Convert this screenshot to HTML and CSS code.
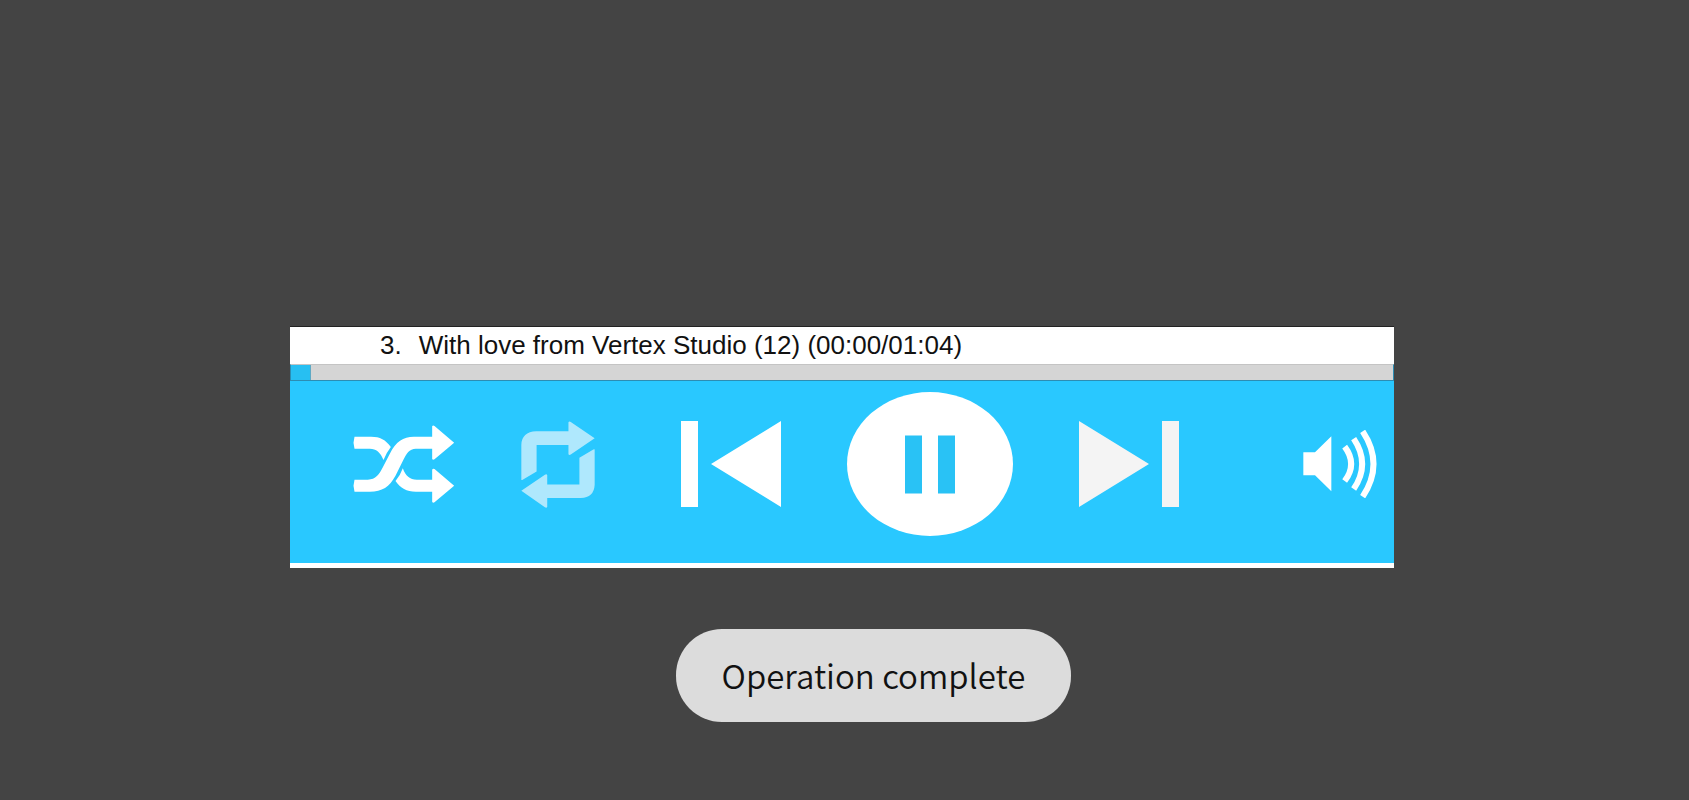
FILE: index.html
```html
<!DOCTYPE html>
<html lang="en">
<head>
    <meta charset="UTF-8">
    <meta name="viewport" content="width=device-width, initial-scale=1.0">
    <title>Music Player</title>
    <link rel="stylesheet" href="styles.css">
</head>
<body>
    <!-- Player -->
    <main class="player">
        <div class="track">
            <span class="track-number">3.</span>
            <span>With love from Vertex Studio (12) (00:00/01:04)</span>
        </div>
        <progress class="progress" value="18" max="1000" aria-label="Track position"></progress>

        <!-- Controls -->
        <div class="controls">
            <button type="button" class="shuffle" aria-label="Shuffle">
                <svg width="102" height="78" viewBox="39 46 303 234">
                    <path d="M42 81H92C118 81 136 90 151 112Q137 130 129 151C120 128 107 117 88 117H42L39 99Z"/>
                    <path d="M42 210H82C106 210 116 194 127 173L148 132C166 96 188 81 220 81H275V50Q277 46 282 49L341 99L282 149Q277 152 275 148V117H226C206 117 198 132 188 152L165 198C147 231 125 246 88 246H42L39 228Z"/>
                    <path d="M187 176C195 199 208 210 229 210H275V180Q277 175 282 178L341 228L282 278Q277 281 275 276V246H226C198 246 180 236 165 214Q179 198 187 176Z"/>
                </svg>
            </button>
            <button type="button" class="repeat" aria-label="Repeat">
                <svg width="74" height="87" viewBox="542 32 223 262">
                    <path d="M543 209V104Q544 65 588 63H685V36Q687 32 692 35L764 84L692 133Q687 136 685 132V104H589V184L547 209Q544 211 543 209Z"/>
                    <path d="M764 118V224Q762 263 722 264H621V291Q619 295 614 292L543 242L614 194Q619 191 621 195V223H718V143L760 118Q763 116 764 118Z"/>
                </svg>
            </button>
            <button type="button" aria-label="Previous">
                <svg width="100" height="86" viewBox="0 0 100 86">
                    <path d="M0 0H17V86H0ZM100 0V86L30 43Z"/>
                </svg>
            </button>
            <button type="button" aria-label="Pause">
                <svg width="166" height="144" viewBox="0 0 166 144">
                    <ellipse cx="83" cy="72" rx="83" ry="72"/>
                    <path class="pause-bars" d="M58 43.500H75V101.500H58ZM91 43.500H108V101.500H91Z"/>
                </svg>
            </button>
            <button type="button" class="next" aria-label="Next">
                <svg width="100" height="86" viewBox="0 0 100 86">
                    <path d="M0 0V86L70 43ZM83 0H100V86H83Z"/>
                </svg>
            </button>
            <button type="button" class="volume" aria-label="Volume">
                <svg width="74" height="68" viewBox="728 92 222 204">
                    <path d="M729 159H764L813 111V276L764 228H729Z"/>
                    <path class="wave" d="M853 142Q892 194 853 245M880 118Q931 194 880 269M907 96Q972 194 907 292"/>
                </svg>
            </button>
        </div>
    </main>

    <!-- Message -->
    <div class="toast" role="status">Operation complete</div>
</body>
</html>
```

FILE: styles.css
```css
/* General Styles */
* {
    margin: 0;
    padding: 0;
    box-sizing: border-box;
}
body {
    display: flex;
    flex-direction: column;
    padding-top: 327px;
    background-color: #444444;
    color: #111;
    font-family: "Liberation Sans", Arial, sans-serif;
}

/* Player */
.player {
    margin: 0 295px 0 290px;
    background-color: #29c8ff;
    border-bottom: 5px solid white;
    box-shadow: 0 -1px 0 #222;
}
.track {
    display: flex;
    gap: 17px;
    padding: 6px 0 7px 90px;
    background-color: white;
    font-size: 26px;
    line-height: 24px;
}
.progress {
    display: block;
    width: 100%;
    height: 17px;
    appearance: none;
    border: 1px solid #2c8db3;
    border-top-color: #c4c4c4;
    background-color: #d5d5d5;
}
.progress::-webkit-progress-bar {
    background-color: #d5d5d5;
}
.progress::-webkit-progress-value {
    background-color: #27bff2;
    border-right: 1px solid #5fa9c4;
}

/* Controls */
.controls {
    display: flex;
    align-items: center;
    gap: 66px;
    padding: 11px 17px 27px 63px;
}
button {
    display: block;
    border: none;
    background: none;
    cursor: pointer;
}
svg {
    display: block;
    fill: white;
}
.repeat {
    margin-right: 20px;
}
.repeat svg {
    fill: #afe8fd;
}
.pause-bars {
    fill: #29c2f5;
}
.next svg {
    fill: #f4f4f4;
}
.volume {
    margin-left: auto;
}
.wave {
    fill: none;
    stroke: white;
    stroke-width: 18;
}

/* Message */
.toast {
    align-self: center;
    margin: 61px 0 0 58px;
    padding: 22px 46px 23px;
    border-radius: 46px;
    background-color: #dcdcdc;
    font-family: "Noto Sans CJK SC", "Noto Sans", sans-serif;
    font-size: 33px;
    font-weight: 350;
    line-height: 48px;
}
```
